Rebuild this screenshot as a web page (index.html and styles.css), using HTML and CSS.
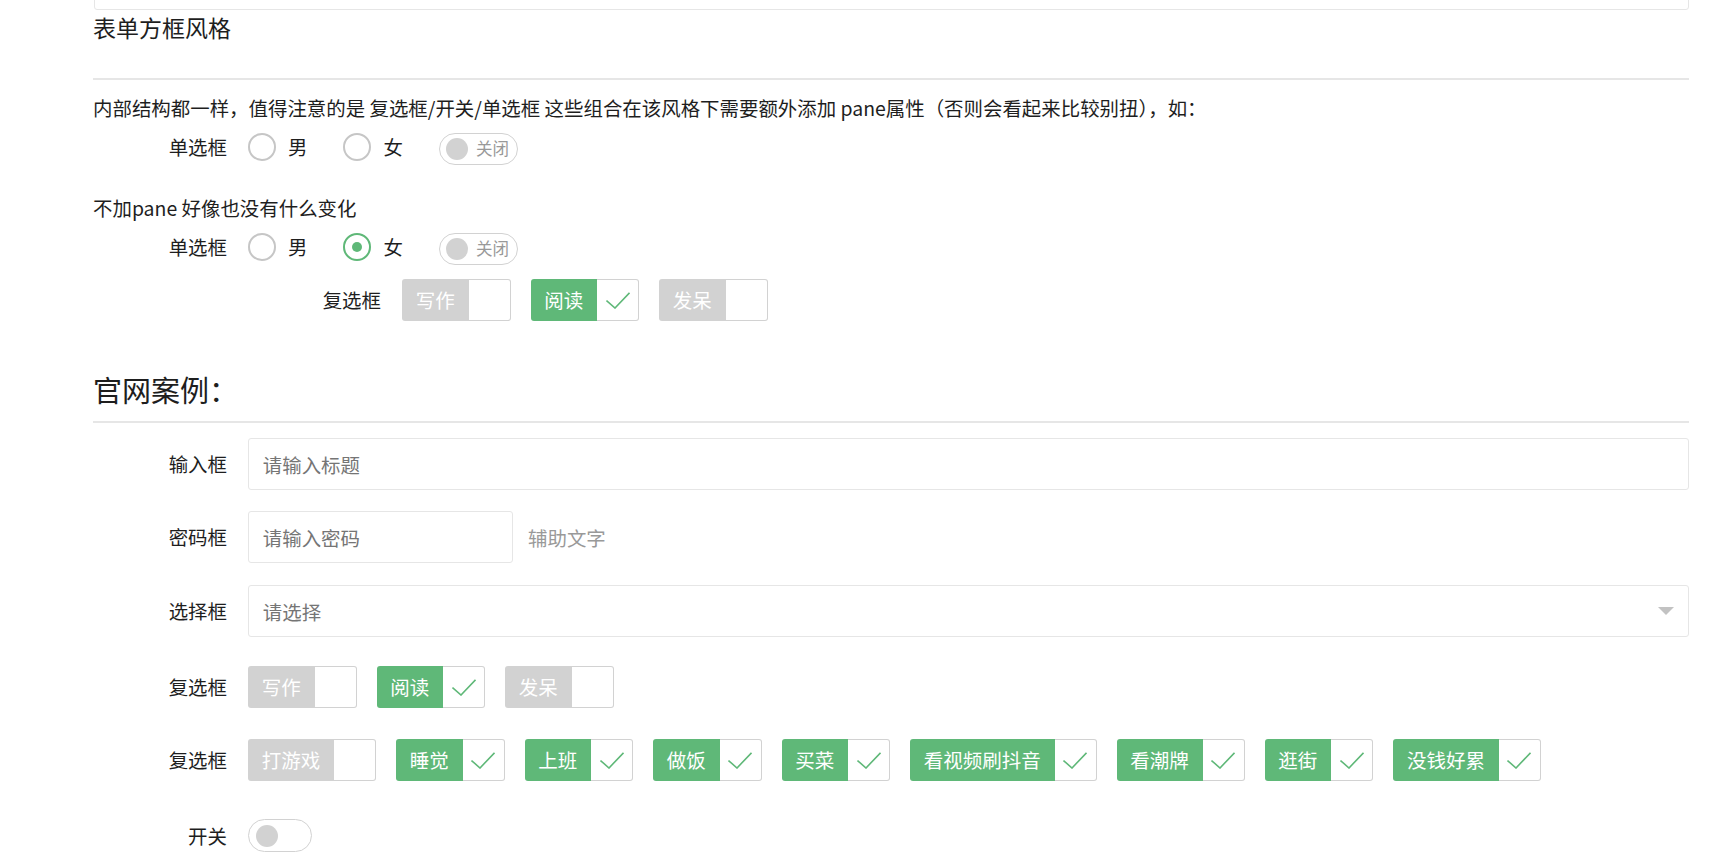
FILE: index.html
```html
<!DOCTYPE html>
<html lang="zh-CN">

<head>
    <meta charset="UTF-8">
    <meta name="viewport" content="width=device-width, initial-scale=1.0">
    <title>表单方框风格</title>
    <link rel="stylesheet" href="styles.css">
</head>

<body>
    <div class="page">
        <!-- 上一个示例的输入框（只露出底边） -->
        <div class="top-input"></div>

        <h3 class="block-title">表单方框风格</h3>
        <hr class="line">

        <p class="note">内部结构都一样，值得注意的是 复选框/开关/单选框 这些组合在该风格下需要额外添加 pane属性（否则会看起来比较别扭），如：</p>

        <div class="form-item row-radio">
            <label class="form-label">单选框</label>
            <div class="radio"><i></i>男</div>
            <div class="radio"><i></i>女</div>
            <div class="switch"><i></i><em>关闭</em></div>
        </div>

        <p class="note note-2">不加pane 好像也没有什么变化</p>

        <div class="form-item row-radio">
            <label class="form-label">单选框</label>
            <div class="radio"><i></i>男</div>
            <div class="radio checked"><i></i>女</div>
            <div class="switch"><i></i><em>关闭</em></div>
        </div>

        <div class="form-item row-pane">
            <label class="form-label">复选框</label>
            <div class="cb"><span>写作</span><i></i></div>
            <div class="cb on"><span>阅读</span><i><svg width="24" height="17" viewBox="0 0 24 17"><path d="M0.5 8.5 L9 16 L23.5 0.8" fill="none" stroke="#5FB878" stroke-width="1.6"/></svg></i></div>
            <div class="cb"><span>发呆</span><i></i></div>
        </div>

        <h2 class="section-title">官网案例：</h2>
        <hr class="line line-2">

        <div class="form-item row-input">
            <label class="form-label">输入框</label>
            <input class="input" type="text" placeholder="请输入标题">
        </div>

        <div class="form-item row-pass">
            <label class="form-label">密码框</label>
            <input class="input input-inline" type="password" placeholder="请输入密码">
            <span class="word-aux">辅助文字</span>
        </div>

        <div class="form-item row-select">
            <label class="form-label">选择框</label>
            <div class="select"><span>请选择</span><i class="edge"></i></div>
        </div>

        <div class="form-item row-check">
            <label class="form-label">复选框</label>
            <div class="cb"><span>写作</span><i></i></div>
            <div class="cb on"><span>阅读</span><i><svg width="24" height="17" viewBox="0 0 24 17"><path d="M0.5 8.5 L9 16 L23.5 0.8" fill="none" stroke="#5FB878" stroke-width="1.6"/></svg></i></div>
            <div class="cb"><span>发呆</span><i></i></div>
        </div>

        <div class="form-item row-check-2">
            <label class="form-label">复选框</label>
            <div class="cb"><span>打游戏</span><i></i></div>
            <div class="cb on"><span>睡觉</span><i><svg width="24" height="17" viewBox="0 0 24 17"><path d="M0.5 8.5 L9 16 L23.5 0.8" fill="none" stroke="#5FB878" stroke-width="1.6"/></svg></i></div>
            <div class="cb on"><span>上班</span><i><svg width="24" height="17" viewBox="0 0 24 17"><path d="M0.5 8.5 L9 16 L23.5 0.8" fill="none" stroke="#5FB878" stroke-width="1.6"/></svg></i></div>
            <div class="cb on"><span>做饭</span><i><svg width="24" height="17" viewBox="0 0 24 17"><path d="M0.5 8.5 L9 16 L23.5 0.8" fill="none" stroke="#5FB878" stroke-width="1.6"/></svg></i></div>
            <div class="cb on"><span>买菜</span><i><svg width="24" height="17" viewBox="0 0 24 17"><path d="M0.5 8.5 L9 16 L23.5 0.8" fill="none" stroke="#5FB878" stroke-width="1.6"/></svg></i></div>
            <div class="cb on"><span>看视频刷抖音</span><i><svg width="24" height="17" viewBox="0 0 24 17"><path d="M0.5 8.5 L9 16 L23.5 0.8" fill="none" stroke="#5FB878" stroke-width="1.6"/></svg></i></div>
            <div class="cb on"><span>看潮牌</span><i><svg width="24" height="17" viewBox="0 0 24 17"><path d="M0.5 8.5 L9 16 L23.5 0.8" fill="none" stroke="#5FB878" stroke-width="1.6"/></svg></i></div>
            <div class="cb on"><span>逛街</span><i><svg width="24" height="17" viewBox="0 0 24 17"><path d="M0.5 8.5 L9 16 L23.5 0.8" fill="none" stroke="#5FB878" stroke-width="1.6"/></svg></i></div>
            <div class="cb on"><span>没钱好累</span><i><svg width="24" height="17" viewBox="0 0 24 17"><path d="M0.5 8.5 L9 16 L23.5 0.8" fill="none" stroke="#5FB878" stroke-width="1.6"/></svg></i></div>
        </div>

        <div class="form-item row-switch">
            <label class="form-label">开关</label>
            <div class="switch blank"><i></i></div>
        </div>
    </div>
</body>

</html>
```

FILE: styles.css
```css
body {
    margin: 0;
    font-family: "Noto Sans CJK SC", sans-serif;
    font-size: 19.45px;
    color: #1e1e1e;
    background-color: #fff;
}

.page {
    margin: 0 25px 0 93px;
}

.top-input {
    height: 52px;
    margin: -42px 0 0 1px;
    border: 1px solid #e6e6e6;
    border-radius: 3px;
    box-sizing: border-box;
}

.block-title {
    margin: 2px 0 0;
    font-size: 23px;
    font-weight: normal;
    line-height: 30px;
}

.section-title {
    margin: 49.5px 0 0;
    font-size: 29px;
    font-weight: normal;
    line-height: 36px;
}

.line {
    margin: 36px 0 0;
    border: 0;
    height: 2px;
    background-color: #e6e6e6;
}

.line-2 {
    margin-top: 14.5px;
}

.note {
    margin: 13.5px 0 0;
    line-height: 28px;
}

.note-2 {
    margin-top: 32px;
}

/* 表单行 */
.form-item {
    display: flex;
    align-items: center;
}

.form-label {
    flex-shrink: 0;
    width: 134px;
    margin-right: 21px;
    text-align: right;
    line-height: 28px;
}

.row-radio {
    height: 30px;
    margin-top: 10px;
}

.row-pane {
    height: 42px;
    margin-top: 17.5px;
    padding-left: 154px;
}

.row-input {
    margin-top: 15px;
}

.row-pass {
    margin-top: 21px;
}

.row-select {
    margin-top: 22px;
}

.row-check {
    height: 42px;
    margin-top: 29px;
}

.row-check-2 {
    height: 42px;
    margin-top: 31px;
}

.row-switch {
    height: 33px;
    margin-top: 38px;
}

/* 单选框 */
.radio {
    display: flex;
    align-items: center;
    margin-right: 36px;
    line-height: 28px;
}

.radio i {
    display: flex;
    align-items: center;
    justify-content: center;
    width: 28px;
    height: 28px;
    margin-right: 12px;
    border: 2px solid #c6c6c6;
    border-radius: 50%;
    box-sizing: border-box;
}

.radio.checked i {
    border-color: #5FB878;
}

.radio.checked i::after {
    content: "";
    width: 10px;
    height: 10px;
    border-radius: 50%;
    background-color: #5FB878;
}

/* 开关 */
.switch {
    display: flex;
    align-items: center;
    height: 32px;
    margin-top: 4px;
    padding: 0 8px 0 6px;
    border: 1px solid #d2d2d2;
    border-radius: 20px;
    box-sizing: border-box;
}

.switch i {
    width: 22px;
    height: 22px;
    margin-right: 8px;
    border-radius: 50%;
    background-color: #d2d2d2;
}

.switch em {
    font-style: normal;
    font-size: 16.5px;
    line-height: 1;
    color: #999;
}

.switch.blank {
    width: 64px;
    height: 33px;
    margin-top: 0;
    padding-left: 7px;
}

/* 复选框 */
.cb {
    display: flex;
    flex-shrink: 0;
    height: 42px;
    margin-right: 20px;
}

.cb span {
    padding: 0 13.75px;
    font-size: 19.5px;
    line-height: 42px;
    color: #fff;
    white-space: nowrap;
    background-color: #d2d2d2;
    border-radius: 3px 0 0 3px;
}

.cb.on span {
    background-color: #5FB878;
}

.cb i {
    display: flex;
    align-items: center;
    justify-content: center;
    width: 42px;
    border: 1px solid #d2d2d2;
    border-left: 0;
    border-radius: 0 3px 3px 0;
    box-sizing: border-box;
}

/* 输入框 */
.input {
    flex: 1;
    height: 52px;
    padding: 0 13.75px;
    border: 1px solid #e6e6e6;
    border-radius: 3px;
    box-sizing: border-box;
    font: inherit;
    color: #1e1e1e;
    outline: none;
}

.input::placeholder {
    color: #757575;
}

.input-inline {
    flex: none;
    width: 265px;
}

.word-aux {
    margin-left: 15px;
    color: #999;
}

.select {
    flex: 1;
    display: flex;
    align-items: center;
    height: 52px;
    padding: 0 14px 0 13.75px;
    border: 1px solid #e6e6e6;
    border-radius: 3px;
    box-sizing: border-box;
    color: #757575;
}

.select .edge {
    margin-left: auto;
    border-style: solid;
    border-width: 8px 8px 0;
    border-color: #c2c2c2 transparent transparent;
}
```
